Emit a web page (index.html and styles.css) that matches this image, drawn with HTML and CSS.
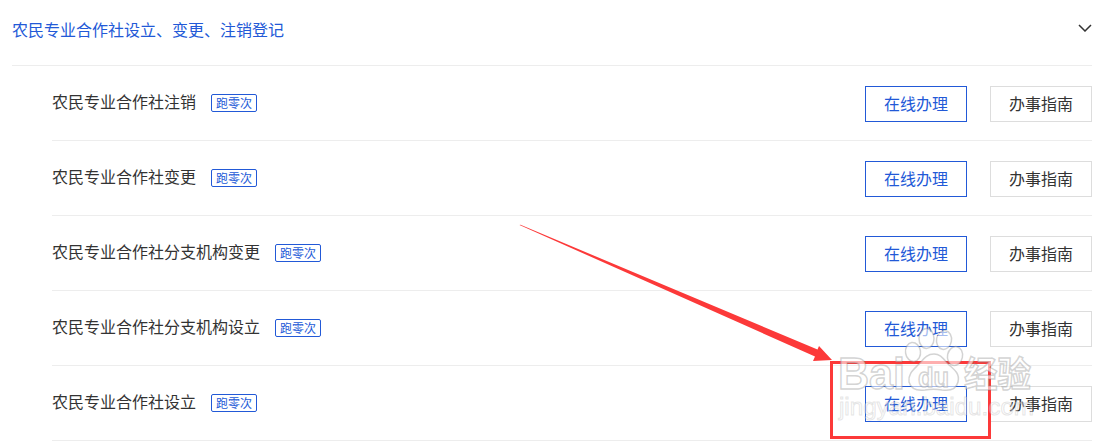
FILE: index.html
```html
<!DOCTYPE html>
<html lang="zh-CN">
<head>
    <meta charset="UTF-8">
    <meta name="viewport" content="width=device-width, initial-scale=1.0">
    <title>农民专业合作社设立、变更、注销登记</title>
    <link rel="stylesheet" href="styles.css">
</head>
<body>

    <div class="container">
        <div class="header">
            <h1>农民专业合作社设立、变更、注销登记</h1>
            <svg class="chevron" width="14" height="8" viewBox="0 0 14 8">
                <path d="M1 1l6 6 6-6" />
            </svg>
        </div>

        <ul class="item-list">
            <li class="item">
                <span class="item-name">农民专业合作社注销</span>
                <span class="tag">跑零次</span>
                <div class="actions">
                    <a class="btn btn-primary">在线办理</a>
                    <a class="btn">办事指南</a>
                </div>
            </li>
            <li class="item">
                <span class="item-name">农民专业合作社变更</span>
                <span class="tag">跑零次</span>
                <div class="actions">
                    <a class="btn btn-primary">在线办理</a>
                    <a class="btn">办事指南</a>
                </div>
            </li>
            <li class="item">
                <span class="item-name">农民专业合作社分支机构变更</span>
                <span class="tag">跑零次</span>
                <div class="actions">
                    <a class="btn btn-primary">在线办理</a>
                    <a class="btn">办事指南</a>
                </div>
            </li>
            <li class="item">
                <span class="item-name">农民专业合作社分支机构设立</span>
                <span class="tag">跑零次</span>
                <div class="actions">
                    <a class="btn btn-primary">在线办理</a>
                    <a class="btn">办事指南</a>
                </div>
            </li>
            <li class="item">
                <span class="item-name">农民专业合作社设立</span>
                <span class="tag">跑零次</span>
                <div class="actions">
                    <a class="btn btn-primary">在线办理</a>
                    <a class="btn">办事指南</a>
                </div>
            </li>
        </ul>
    </div>

    <svg class="overlay" width="1094" height="446" viewBox="0 0 1094 446">
        <!-- arrow and frame -->
        <path class="arrow" d="M519.500 225L520.500 224.800L817.500 349.500L819 346L832 360L813 361L815 356.500Z" />
        <rect class="frame" x="831.500" y="362.500" width="158" height="75" />

        <g class="watermark">
            <text class="wm-logo" x="838" y="389" textLength="67" lengthAdjust="spacingAndGlyphs">Bai</text>
            <ellipse cx="913" cy="352" rx="7.500" ry="9.500" transform="rotate(-8 913 352)" />
            <ellipse cx="926.500" cy="338.500" rx="7.500" ry="10" />
            <ellipse cx="944" cy="340" rx="7.500" ry="9.500" transform="rotate(10 944 340)" />
            <ellipse cx="955" cy="356" rx="7.500" ry="9.500" transform="rotate(12 955 356)" />
            <path d="M934 354C941 354 944 360 949 365C955 370 960 374 958 382C956 390 949 391 942 390C936 389 931 389 925 390C917 391 911 389 909 382C908 374 913 370 918 365C923 360 926 354 934 354Z" />
            <text class="wm-du" x="918" y="387" textLength="31" lengthAdjust="spacingAndGlyphs">du</text>
            <text class="wm-cn" x="964" y="387" textLength="67" lengthAdjust="spacingAndGlyphs">经验</text>
            <text class="wm-url" x="839" y="415" textLength="195" lengthAdjust="spacingAndGlyphs">jingyan.baidu.com</text>
        </g>
    </svg>

</body>
</html>
```

FILE: styles.css
```css
body {
    font-family: "Noto Sans CJK SC", "Microsoft YaHei", sans-serif;
    font-size: 16px;
    margin: 0;
    background-color: #fff;
    color: #333;
    position: relative;
    height: 446px;
    overflow: hidden;
}
.container {
    width: 1080px;
    margin-left: 12px;
}
.header {
    display: flex;
    justify-content: space-between;
    align-items: center;
    height: 65px;
    border-bottom: 1px solid #ededed;
}
h1 {
    margin: 0 0 8px;
    font-size: 16px;
    font-weight: normal;
    line-height: 24px;
    color: #2259d7;
}
.chevron {
    margin-bottom: 9px;
    fill: none;
    stroke: #333;
    stroke-width: 1.5;
}
.item-list {
    list-style: none;
    margin: 0;
    padding: 0 0 0 40px;
}
.item {
    display: flex;
    align-items: flex-start;
    box-sizing: border-box;
    height: 75px;
    padding-top: 20px;
    border-bottom: 1px solid #ededed;
}
.item-name {
    margin-top: 3px;
    line-height: 24px;
}
.tag {
    box-sizing: border-box;
    width: 46px;
    height: 18px;
    margin: 8px 0 0 15px;
    border: 1px solid #2259d7;
    border-radius: 2px;
    font-size: 12px;
    line-height: 16px;
    text-align: center;
    color: #2259d7;
}
.actions {
    display: flex;
    gap: 23px;
    margin-left: auto;
}
.btn {
    box-sizing: border-box;
    width: 102px;
    height: 36px;
    border: 1px solid #ddd;
    line-height: 33px;
    text-align: center;
}
.btn-primary {
    border-color: #2259d7;
    color: #2259d7;
}
.overlay {
    position: absolute;
    top: 0;
    left: 0;
    pointer-events: none;
}
.arrow {
    fill: #fc3939;
}
.frame {
    fill: none;
    stroke: #fc3939;
    stroke-width: 3;
}
.watermark {
    fill: rgba(255, 255, 255, 0.6);
    stroke: rgba(130, 130, 130, 0.35);
    stroke-width: 1.5;
}
.wm-logo,
.wm-du {
    font-family: "Liberation Sans", Arial, sans-serif;
    font-weight: bold;
}
.wm-logo {
    font-size: 45px;
}
.wm-du {
    font-size: 27px;
}
.wm-cn {
    font-size: 35px;
    font-weight: bold;
}
.wm-url {
    font-family: "Liberation Sans", Arial, sans-serif;
    font-size: 23px;
    fill: rgba(255, 255, 255, 0.4);
    stroke: rgba(150, 150, 150, 0.25);
    stroke-width: 1;
}
```
